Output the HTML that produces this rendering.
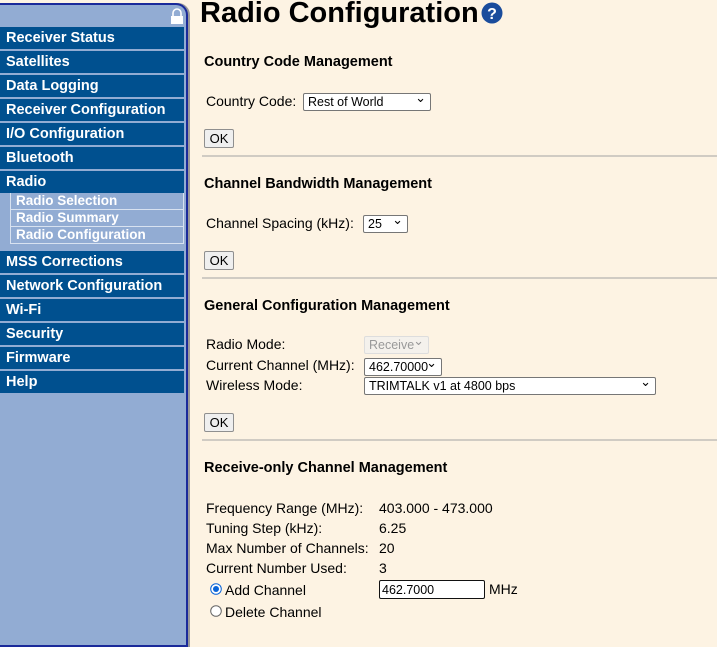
<!DOCTYPE html>
<html><head><style>
body{margin:0;width:717px;height:625px;overflow:hidden;background:#fdf3e3;font-family:"Liberation Sans",sans-serif;position:relative}
.side{position:absolute;left:0;top:3px;width:186px;height:640px;background:#92acd3;border:2px solid #1a2a9a;border-left:none;border-radius:0 12px 0 0;box-shadow:2px 0 0 #999}
.m{position:absolute;left:0;width:184px;height:22px;background:#00508f;color:#fff;font-weight:bold;font-size:14.5px;line-height:22px;text-indent:6px}
.sub{position:absolute;left:10px;width:172px;height:16px;border:1px solid #d8e2f0;border-top:none;color:#fff;font-weight:bold;font-size:13.5px;line-height:16px;text-indent:5px}
.a{position:absolute;font-size:14px;color:#000;white-space:nowrap}
.h{position:absolute;left:204px;font-weight:bold;font-size:14.5px}
.hr{position:absolute;left:202px;width:515px;height:2px;background:#d0cbc3}
.sel{position:absolute;height:16px;border:1px solid #767676;border-radius:2px;background:#fff;font-size:12.5px;line-height:16px;padding-left:4px;box-sizing:border-box;height:18px}
.sel:after{content:"⌄";position:absolute;right:4px;top:-4px;font-size:13px}
.ok{position:absolute;left:204px;width:30px;height:19px;border:1px solid #8f8f8f;border-radius:2px;background:#efefef;font-size:13px;text-align:center;line-height:18px;box-sizing:border-box}
</style></head><body>
<div class="side"></div>
<svg style="position:absolute;left:170px;top:8px" width="14" height="16"><path d="M3 8V5a4 4 0 0 1 8 0v3" fill="none" stroke="#fff" stroke-width="1.6"/><rect x="1" y="8" width="12" height="8" fill="#fff"/></svg>
<div class="m" style="top:27px">Receiver Status</div>
<div class="m" style="top:51px">Satellites</div>
<div class="m" style="top:75px">Data Logging</div>
<div class="m" style="top:99px">Receiver Configuration</div>
<div class="m" style="top:123px">I/O Configuration</div>
<div class="m" style="top:147px">Bluetooth</div>
<div class="m" style="top:171px">Radio</div>
<div class="sub" style="top:193px">Radio Selection</div>
<div class="sub" style="top:210px">Radio Summary</div>
<div class="sub" style="top:227px">Radio Configuration</div>
<div class="m" style="top:251px">MSS Corrections</div>
<div class="m" style="top:275px">Network Configuration</div>
<div class="m" style="top:299px">Wi-Fi</div>
<div class="m" style="top:323px">Security</div>
<div class="m" style="top:347px">Firmware</div>
<div class="m" style="top:371px">Help</div>

<div class="a" style="left:200px;top:-3px;font-size:29px;font-weight:bold">Radio Configuration</div>
<svg style="position:absolute;left:481px;top:2px" width="22" height="22"><circle cx="11" cy="11" r="10.5" fill="#1a4c9c"/><text x="11" y="17" font-family="Liberation Sans" font-weight="bold" font-size="16" fill="#fff" text-anchor="middle">?</text></svg>

<div class="h" style="top:54px">Country Code Management</div>
<div class="a" style="left:206px;top:93px">Country Code:</div>
<div class="sel" style="left:303px;top:93px;width:128px">Rest of World</div>
<div class="ok" style="top:129px">OK</div>
<div class="hr" style="top:155px"></div>

<div class="h" style="top:176px">Channel Bandwidth Management</div>
<div class="a" style="left:206px;top:215px">Channel Spacing (kHz):</div>
<div class="sel" style="left:363px;top:215px;width:45px">25</div>
<div class="ok" style="top:251px">OK</div>
<div class="hr" style="top:277px"></div>

<div class="h" style="top:298px">General Configuration Management</div>
<div class="a" style="left:206px;top:336px">Radio Mode:</div>
<div class="sel" style="left:364px;top:336px;width:65px;color:#999;border-color:#ddd;background:#f4f1ec">Receive</div>
<div class="a" style="left:206px;top:357px">Current Channel (MHz):</div>
<div class="sel" style="left:364px;top:358px;width:78px">462.70000</div>
<div class="a" style="left:206px;top:377px">Wireless Mode:</div>
<div class="sel" style="left:364px;top:377px;width:292px">TRIMTALK v1 at 4800 bps</div>
<div class="ok" style="top:413px">OK</div>
<div class="hr" style="top:439px"></div>

<div class="h" style="top:460px">Receive-only Channel Management</div>
<div class="a" style="left:206px;top:500px">Frequency Range (MHz):</div><div class="a" style="left:379px;top:500px">403.000 - 473.000</div>
<div class="a" style="left:206px;top:520px">Tuning Step (kHz):</div><div class="a" style="left:379px;top:520px">6.25</div>
<div class="a" style="left:206px;top:540px">Max Number of Channels:</div><div class="a" style="left:379px;top:540px">20</div>
<div class="a" style="left:206px;top:560px">Current Number Used:</div><div class="a" style="left:379px;top:560px">3</div>
<svg style="position:absolute;left:210px;top:583px" width="12" height="12"><circle cx="6" cy="6" r="5.3" fill="#fff" stroke="#0a64d8"/><circle cx="6" cy="6" r="3" fill="#0a64d8"/></svg>
<div class="a" style="left:225px;top:582px">Add Channel</div>
<div style="position:absolute;left:379px;top:580px;width:106px;height:19px;border:1px solid #111;border-radius:2px;background:#fff;font-size:12.5px;line-height:18px;padding-left:2px;box-sizing:border-box">462.7000</div>
<div class="a" style="left:489px;top:581px">MHz</div>
<svg style="position:absolute;left:210px;top:605px" width="12" height="12"><circle cx="6" cy="6" r="5.3" fill="#fff" stroke="#666"/></svg>
<div class="a" style="left:225px;top:604px">Delete Channel</div>
</body></html>
